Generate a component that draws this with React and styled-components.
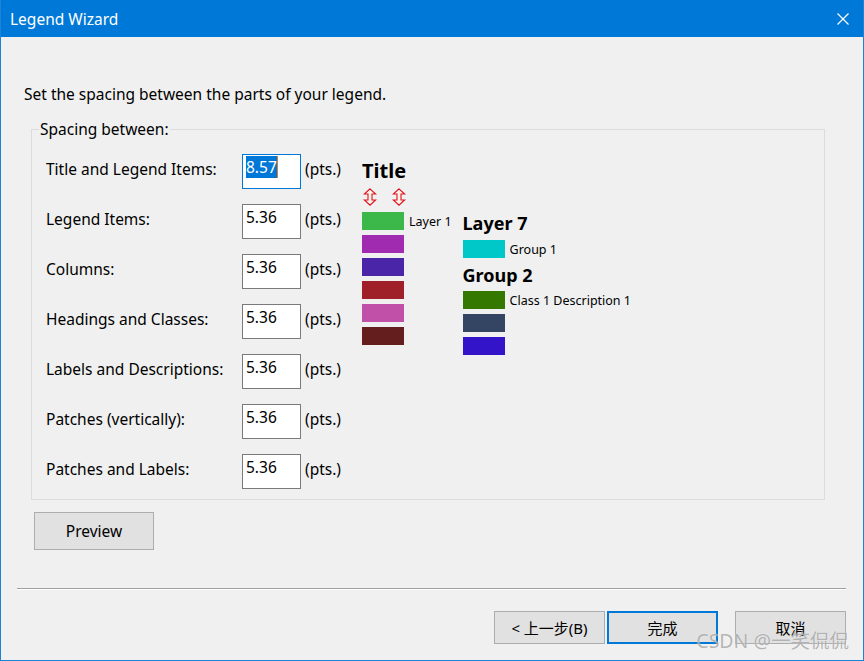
import React from "react";
import styled, { createGlobalStyle } from "styled-components";

const Global = createGlobalStyle`
  html, body { margin: 0; padding: 0; background: #f0f0f0; }
  body { font-family: "Noto Sans", "Noto Sans CJK SC", sans-serif; }
  * { box-sizing: border-box; }
`;

const Window = styled.div`
  position: relative;
  width: 864px;
  height: 661px;
  background: #f0f0f0;
  border: 1px solid #1883d7;
  border-top: none;
  display: flex;
  flex-direction: column;
  overflow: hidden;
`;

const TitleBar = styled.div`
  height: 37px;
  margin: 0 -1px;
  background: #0078d7;
  color: #fff;
  display: flex;
  align-items: center;
  justify-content: space-between;
  padding: 0 15px 0 10px;
  font-size: 15.5px;
  flex-shrink: 0;
`;

const Body = styled.div`
  flex: 1;
  display: flex;
  flex-direction: column;
  font-size: 15.5px;
  color: #000;
`;

const Intro = styled.div`
  margin: 47px 0 0 23px;
  line-height: 20px;
  height: 20px;
`;

const Group = styled.fieldset`
  margin: 15px 0 0 30px;
  width: 794px;
  border: 1px solid #dcdcdc;
  padding: 15px 14px 10px 14px;
  display: flex;
  gap: 13px;
  min-width: 0;
`;

const Legend = styled.legend`
  padding: 0 1px;
  margin-left: -7px;
  line-height: 20px;
  font-size: 15.5px;
`;

const Rows = styled.div`
  display: grid;
  grid-template-columns: 192px 59px 44px;
  column-gap: 4px;
  row-gap: 15px;
  align-items: start;
`;

const Label = styled.div`
  line-height: 20px;
  padding-top: 5px;
  white-space: nowrap;
`;

const TextBox = styled.div`
  width: 59px;
  height: 35px;
  background: #fff;
  border: 1px solid ${(p) => (p.$focused ? "#0078d7" : "#7a7a7a")};
  padding: 3px 0 0 3px;
  line-height: 19px;
`;

const Selected = styled.span`
  background: #0078d7;
  color: #fff;
  border-right: 1px solid #e87a18;
`;

const Units = styled(Label)``;

const Preview = styled.div`
  display: flex;
  gap: 11px;
  padding-top: 4px;
  font-family: "Noto Sans", sans-serif;
`;

const Col = styled.div`
  display: flex;
  flex-direction: column;
  padding-top: ${(p) => p.$pt || 0}px;
`;

const Heading = styled.div`
  font-weight: bold;
  font-size: ${(p) => p.$size}px;
  line-height: ${(p) => p.$lh}px;
  margin-bottom: ${(p) => p.$mb || 0}px;
`;

const Arrows = styled.div`
  display: flex;
  gap: 15px;
  padding-left: 1px;
  height: 20px;
  align-items: center;
  margin: 3px 0 5px;
`;

const ItemRow = styled.div`
  display: flex;
  align-items: center;
  gap: 5px;
  height: 18px;
  margin-bottom: 5px;
  font-size: 12.5px;
  white-space: nowrap;
`;

const Patch = styled.div`
  width: 42px;
  height: 18px;
  background: ${(p) => p.$c};
  flex-shrink: 0;
`;

const PreviewBtn = styled.button`
  margin: 12px 0 0 33px;
  width: 120px;
  height: 38px;
  background: #e1e1e1;
  border: 1px solid #adadad;
  font-family: inherit;
  font-size: 15.5px;
  color: #000;
  padding: 0;
`;

const Separator = styled.div`
  margin: 38px 17px 0 16px;
  height: 2px;
  border-top: 1px solid #a0a0a0;
  border-bottom: 1px solid #fff;
`;

const Footer = styled.div`
  display: flex;
  justify-content: flex-end;
  margin: 21px 17px 0 0;
`;

const DlgBtn = styled.button`
  width: 111px;
  height: 33px;
  background: #e1e1e1;
  border: ${(p) => (p.$default ? "2px solid #0078d7" : "1px solid #adadad")};
  font-family: "Noto Sans", "Noto Sans CJK SC", sans-serif;
  font-size: 15px;
  color: #000;
  padding: 0;
  margin-left: ${(p) => p.$ml || 0}px;
`;

const Watermark = styled.div`
  position: absolute;
  right: 14px;
  bottom: 6px;
  font-family: "Noto Sans", "Noto Sans CJK SC", sans-serif;
  font-size: 19.5px;
  color: rgba(120, 120, 120, 0.55);
  text-shadow: 0 0 1px rgba(255,255,255,0.8);
  pointer-events: none;
`;

const UpDown = () => (
  <svg width="14" height="18" viewBox="0 0 14 18">
    <path
      d="M7 0.8 L12.6 6 L9 6 L9 12 L12.6 12 L7 17.2 L1.4 12 L5 12 L5 6 L1.4 6 Z"
      fill="#fbf3e6"
      stroke="#e01020"
      strokeWidth="1.1"
      strokeLinejoin="miter"
    />
  </svg>
);

const CloseX = () => (
  <svg width="12" height="12" viewBox="0 0 12 12">
    <path d="M0.5 0.5 L11.5 11.5 M11.5 0.5 L0.5 11.5" stroke="#fff" strokeWidth="1.2" />
  </svg>
);

const rows = [
  ["Title and Legend Items:", "8.57", true],
  ["Legend Items:", "5.36"],
  ["Columns:", "5.36"],
  ["Headings and Classes:", "5.36"],
  ["Labels and Descriptions:", "5.36"],
  ["Patches (vertically):", "5.36"],
  ["Patches and Labels:", "5.36"],
];

const leftPatches = ["#3cb84a", "#a02ab0", "#4a25a8", "#a0202a", "#c050a8", "#641e1e"];

export default function App() {
  return (
    <>
      <Global />
      <Window>
        <TitleBar>
          <span>Legend Wizard</span>
          <CloseX />
        </TitleBar>
        <Body>
          <Intro>Set the spacing between the parts of your legend.</Intro>
          <Group>
            <Legend>Spacing between:</Legend>
            <Rows>
              {rows.map(([label, val, focused]) => (
                <React.Fragment key={label}>
                  <Label>{label}</Label>
                  <TextBox $focused={focused}>
                    {focused ? <Selected>{val}</Selected> : val}
                  </TextBox>
                  <Units>(pts.)</Units>
                </React.Fragment>
              ))}
            </Rows>
            <Preview>
              <Col>
                <Heading $size={20} $lh={26}>Title</Heading>
                <Arrows>
                  <UpDown />
                  <UpDown />
                </Arrows>
                {leftPatches.map((c, i) => (
                  <ItemRow key={c}>
                    <Patch $c={c} />
                    {i === 0 && <span>Layer 1</span>}
                  </ItemRow>
                ))}
              </Col>
              <Col $pt={53}>
                <Heading $size={18} $lh={24} $mb={5}>Layer 7</Heading>
                <ItemRow>
                  <Patch $c="#00c8c8" />
                  <span>Group 1</span>
                </ItemRow>
                <Heading $size={18} $lh={24} $mb={4}>Group 2</Heading>
                <ItemRow>
                  <Patch $c="#347800" />
                  <span>Class 1 Description 1</span>
                </ItemRow>
                <ItemRow>
                  <Patch $c="#334563" />
                </ItemRow>
                <ItemRow>
                  <Patch $c="#3414c8" />
                </ItemRow>
              </Col>
            </Preview>
          </Group>
          <div>
            <PreviewBtn>Preview</PreviewBtn>
          </div>
          <Separator />
          <Footer>
            <DlgBtn>&lt; 上一步(B)</DlgBtn>
            <DlgBtn $default $ml={2}>完成</DlgBtn>
            <DlgBtn $ml={17}>取消</DlgBtn>
          </Footer>
        </Body>
        <Watermark>CSDN @一笑侃侃</Watermark>
      </Window>
    </>
  );
}
